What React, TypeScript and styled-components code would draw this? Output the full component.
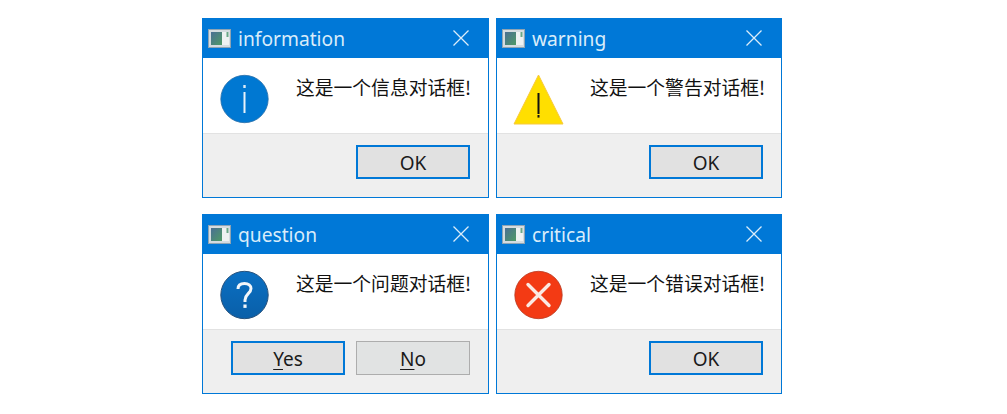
import styled, { createGlobalStyle } from "styled-components";
import type { ReactNode } from "react";

const GlobalStyle = createGlobalStyle`
  html, body {
    margin: 0;
    padding: 0;
    background: #fff;
  }
`;

const Page = styled.div`
  display: grid;
  grid-template-columns: 287px 286px;
  grid-auto-rows: 180px;
  column-gap: 7px;
  row-gap: 16px;
  width: 1007px;
  height: 414px;
  box-sizing: border-box;
  padding: 18px 0 0 202px;
`;

const Dialog = styled.div`
  display: flex;
  flex-direction: column;
  border: 1px solid #0078d7;
  border-top: 0;
  box-sizing: border-box;
  background: #fff;
  overflow: hidden;
`;

const TitleBar = styled.div`
  display: flex;
  align-items: center;
  height: 40px;
  margin: 0 -1px;
  padding: 0 20px 0 6px;
  background: #0078d7;
  color: #d9ecfa;
  font-family: "Noto Sans", sans-serif;
  font-size: 19.2px;
  flex: none;
`;

const TitleText = styled.span`
  flex: 1;
  margin-left: 7px;
  padding-top: 1px;
`;

const Body = styled.div`
  display: flex;
  align-items: flex-start;
  height: 76px;
  flex: none;
  box-sizing: border-box;
  padding: 16px 0 0 18px;
  border-bottom: 1px solid #e2e2e2;
`;

const IconSlot = styled.div`
  width: 52px;
  height: 52px;
  flex: none;
  svg {
    display: block;
    overflow: visible;
  }
`;

const Message = styled.div`
  margin: 0 0 0 23px;
  color: #111;
  font-family: "Noto Sans CJK SC", sans-serif;
  font-size: 18.8px;
  line-height: 26px;
  white-space: nowrap;
`;

const Footer = styled.div`
  flex: 1;
  display: flex;
  justify-content: flex-end;
  gap: 11px;
  padding: 11px 18px 0 0;
  background: #efefef;
`;

const Button = styled.div<{ $focused?: boolean }>`
  display: flex;
  align-items: center;
  justify-content: center;
  width: 114px;
  height: 34px;
  box-sizing: border-box;
  padding-top: 2px;
  border: ${(p) => (p.$focused ? "2px solid #0078d7" : "1px solid #adadad")};
  background: ${(p) => (p.$focused ? "#e1e1e1" : "#e1e3e3")};
  color: #1a1a1a;
  font-family: "Noto Sans", sans-serif;
  font-size: 19px;
`;

const Mnemonic = styled.span`
  text-decoration: underline;
  text-underline-offset: 3px;
  text-decoration-thickness: 1px;
`;

const AppIcon = () => (
  <svg width="23" height="19" viewBox="0 0 23 19" style={{ flex: "none" }}>
    <defs>
      <linearGradient id="app-pane" x1="0" y1="0" x2="1" y2="1">
        <stop offset="0" stopColor="#4a6f94" />
        <stop offset="1" stopColor="#4f9a66" />
      </linearGradient>
    </defs>
    <rect x="0.5" y="0.5" width="22" height="18" fill="#d5dce0" stroke="#8ea4b4" />
    <rect x="3" y="3" width="11" height="13" fill="url(#app-pane)" />
    <rect x="14" y="3" width="7" height="13" fill="#eef2f2" />
    <rect x="18.5" y="3" width="2" height="5" fill="#6aa888" />
  </svg>
);

const CloseIcon = () => (
  <svg width="16" height="16" viewBox="0 0 16 16">
    <path d="M0.5 0.5 L15.5 15.5 M15.5 0.5 L0.5 15.5" stroke="#dcedf9" strokeWidth="1.3" fill="none" />
  </svg>
);

const InfoIcon = () => (
  <svg width="52" height="52" viewBox="0 0 52 52">
    <circle cx="23.5" cy="25" r="23.7" fill="#0078d2" stroke="#2a6ea8" strokeWidth="0.8" />
    <rect x="22.3" y="11" width="2.4" height="3" fill="#dcebf7" />
    <rect x="22.5" y="18" width="2" height="21" fill="#e8f2fa" />
  </svg>
);

const WarningIcon = () => (
  <svg width="52" height="52" viewBox="0 0 52 52">
    <path d="M23.5 1 L48 50 L-1 50 Z" fill="#ffdf00" stroke="#f7c93c" strokeWidth="1" />
    <rect x="22.5" y="19" width="2" height="21" fill="#111" />
    <rect x="22.5" y="41" width="2" height="2.6" fill="#111" />
  </svg>
);

const QuestionIcon = () => (
  <svg width="52" height="52" viewBox="0 0 52 52">
    <defs>
      <linearGradient id="question-fill" x1="0" y1="0" x2="0" y2="1">
        <stop offset="0" stopColor="#0a70c4" />
        <stop offset="1" stopColor="#0a5fa8" />
      </linearGradient>
    </defs>
    <circle cx="23.5" cy="25" r="23.7" fill="url(#question-fill)" stroke="#28527c" strokeWidth="1" />
    <path
      d="M17 19 C17 15 19.5 13.5 23.5 13.5 C27.5 13.5 30 15.5 30 18.5 C30 23.5 24 24 24 30 L24 32"
      fill="none"
      stroke="#f2f6fa"
      strokeWidth="3"
    />
    <rect x="22.4" y="34.5" width="3.2" height="3.4" fill="#f2f6fa" />
  </svg>
);

const CriticalIcon = () => (
  <svg width="52" height="52" viewBox="0 0 52 52">
    <circle cx="23.5" cy="25" r="23.7" fill="#f33a14" stroke="#b8391f" strokeWidth="0.8" />
    <path d="M13 14.5 L34 35.5 M34 14.5 L13 35.5" stroke="#fbe9e3" strokeWidth="3.4" fill="none" strokeLinecap="round" />
  </svg>
);

type BoxProps = {
  title: string;
  message: string;
  icon: ReactNode;
  children: ReactNode;
};

const MessageBox = ({ title, message, icon, children }: BoxProps) => (
  <Dialog>
    <TitleBar>
      <AppIcon />
      <TitleText>{title}</TitleText>
      <CloseIcon />
    </TitleBar>
    <Body>
      <IconSlot>{icon}</IconSlot>
      <Message>{message}</Message>
    </Body>
    <Footer>{children}</Footer>
  </Dialog>
);

export default function App() {
  return (
    <>
      <GlobalStyle />
      <Page>
        <MessageBox title="information" message="这是一个信息对话框!" icon={<InfoIcon />}>
          <Button $focused>OK</Button>
        </MessageBox>
        <MessageBox title="warning" message="这是一个警告对话框!" icon={<WarningIcon />}>
          <Button $focused>OK</Button>
        </MessageBox>
        <MessageBox title="question" message="这是一个问题对话框!" icon={<QuestionIcon />}>
          <Button $focused>
            <span><Mnemonic>Y</Mnemonic>es</span>
          </Button>
          <Button>
            <span><Mnemonic>N</Mnemonic>o</span>
          </Button>
        </MessageBox>
        <MessageBox title="critical" message="这是一个错误对话框!" icon={<CriticalIcon />}>
          <Button $focused>OK</Button>
        </MessageBox>
      </Page>
    </>
  );
}
